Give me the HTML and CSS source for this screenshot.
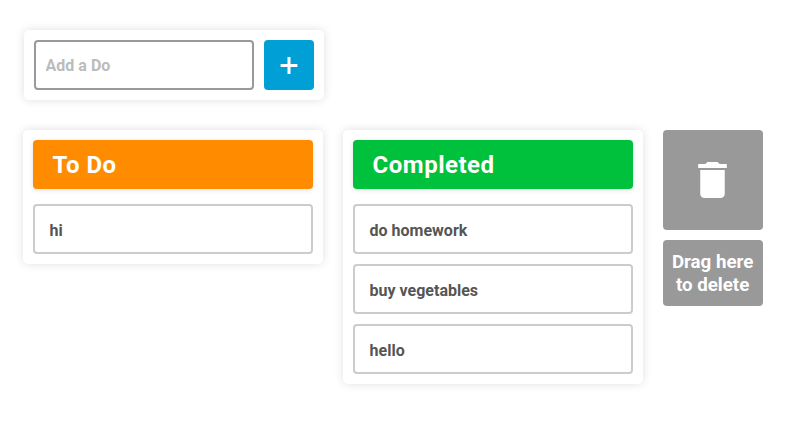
FILE: index.html
```html
<!DOCTYPE html>
<html lang="en">
<head>
<meta charset="utf-8">
<title>To Do</title>
<link rel="stylesheet" href="styles.css">
</head>
<body>
<form class="panel add">
  <input class="add-input" type="text" placeholder="Add a Do">
  <button class="add-button" type="button" aria-label="Add">
    <svg width="18" height="18" viewBox="0 0 18 18"><path d="M9 1v17M.6 9.5h16.8" stroke="#fff" stroke-width="3"/></svg>
  </button>
</form>
<main class="board">
  <section class="panel list">
    <h2 class="heading todo">To Do</h2>
    <div class="item">hi</div>
  </section>
  <section class="panel list">
    <h2 class="heading completed">Completed</h2>
    <div class="item">do homework</div>
    <div class="item">buy vegetables</div>
    <div class="item">hello</div>
  </section>
  <aside class="trash">
    <div class="bin">
      <svg width="49" height="48" viewBox="0 0 24 24" preserveAspectRatio="none"><path fill="#fff" d="M6 19c0 1.1.9 2 2 2h8c1.1 0 2-.9 2-2V7H6v12zM19 4h-3.5l-1-1h-5l-1 1H5v2h14V4z"/></svg>
    </div>
    <div class="hint">Drag here<br>to delete</div>
  </aside>
</main>
</body>
</html>
```
FILE: styles.css
```css
* { box-sizing: border-box; }
body {
  margin: 0;
  padding: 30px 22.6px;
  background: #fff;
  font-family: Roboto, sans-serif;
  font-weight: 700;
  color: #555;
}
.panel {
  background: #fff;
  border-radius: 5px;
  box-shadow: 0 0 10px rgba(0, 0, 0, 0.13);
}
.add {
  display: flex;
  gap: 10px;
  width: 300px;
  height: 70px;
  margin: 0 0 30px 1px;
  padding: 10px;
}
.add-input {
  width: 220px;
  height: 50px;
  padding: 0 10px;
  border: 2px solid #999;
  border-radius: 4px;
  font: 700 16px Roboto, sans-serif;
}
.add-input::placeholder { color: #bbb; }
.add-button {
  display: flex;
  align-items: center;
  justify-content: center;
  width: 50px;
  height: 50px;
  padding: 0;
  border: 0;
  border-radius: 4px;
  background: #009fd6;
}
.board { display: flex; align-items: flex-start; gap: 20px; }
.list { width: 300px; padding: 10px; }
.heading {
  height: 49px;
  margin: 0 0 15px;
  padding-left: 20px;
  border-radius: 4px;
  box-shadow: 0 1px 5px rgba(0, 0, 0, 0.12);
  font-size: 24px;
  letter-spacing: 0.5px;
  line-height: 50px;
  color: #fff;
}
.todo { background: #ff8c00; }
.completed { background: #00c13c; }
.item {
  height: 50px;
  padding-left: 15px;
  border: 2px solid #ccc;
  border-radius: 4px;
  font-size: 16px;
  line-height: 50px;
}
.item + .item { margin-top: 10px; }
.trash { width: 100px; }
.bin, .hint {
  border-radius: 4px;
  background: #999;
  color: #fff;
}
.bin {
  display: flex;
  align-items: center;
  justify-content: center;
  height: 100px;
  margin-bottom: 10px;
}
.hint {
  height: 66px;
  padding-top: 11px;
  font-size: 18.72px;
  line-height: 23px;
  text-align: center;
}
```
